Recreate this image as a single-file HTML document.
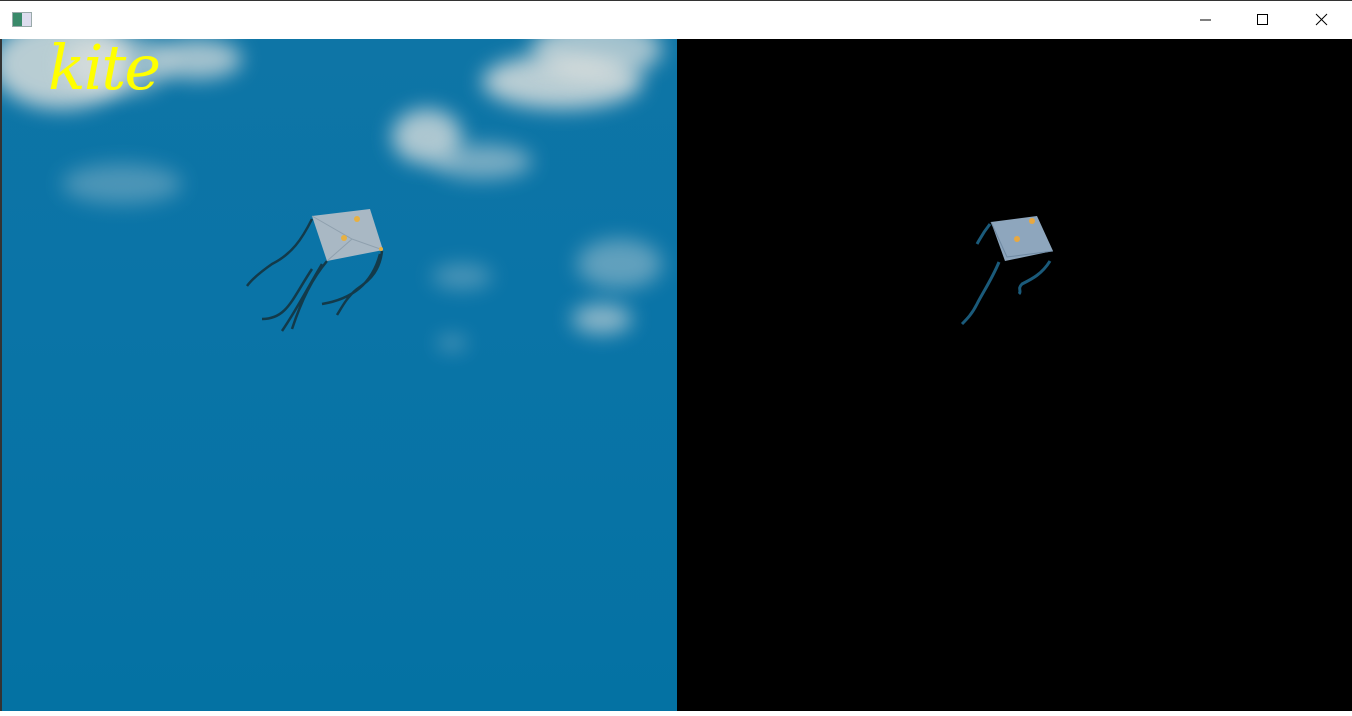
<!DOCTYPE html>
<html><head><meta charset="utf-8"><style>
html,body{margin:0;padding:0;width:1352px;height:711px;overflow:hidden;background:#fff;font-family:"Liberation Sans",sans-serif}
.top{position:absolute;left:0;top:0;width:1352px;height:1px;background:#333}
.bar{position:absolute;left:0;top:1px;width:1352px;height:38px;background:#fff}
.ico{position:absolute;left:12px;top:11px;width:18px;height:13px;border:1px solid #9aa;background:linear-gradient(90deg,#3a8a6a 0 50%,#dde 50%)}
.btn{position:absolute;top:0;width:58px;height:38px}
.left{position:absolute;left:2px;top:39px;width:675px;height:672px;background:linear-gradient(180deg,#0e75a6 0%,#0a74a7 40%,#0472a3 100%);overflow:hidden}
.right{position:absolute;left:677px;top:39px;width:675px;height:672px;background:#000}
.edge{position:absolute;left:0;top:39px;width:2px;height:672px;background:#333}
.c{position:absolute;border-radius:50%;background:#e3e3df;filter:blur(10px)}
.kt{position:absolute;left:46px;top:-8px;color:#ffff00;font-family:"DejaVu Serif",serif;font-style:italic;font-size:62px;letter-spacing:-2px;-webkit-text-stroke:0}
</style></head><body>
<div class="top"></div>
<div class="bar">
<div class="ico"></div>
<svg class="btn" style="left:1176px" viewBox="0 0 58 38"><line x1="24" y1="19" x2="35" y2="19" stroke="#000"/></svg>
<svg class="btn" style="left:1234px" viewBox="0 0 58 38"><rect x="23.5" y="13.5" width="10" height="10" fill="none" stroke="#000"/></svg>
<svg class="btn" style="left:1292px" viewBox="0 0 58 38"><path d="M24 13L35 24M35 13L24 24" stroke="#000"/></svg>
</div>
<div class="edge"></div>
<div class="left">
<div class="c" style="left:-10px;top:-20px;width:140px;height:90px;opacity:.8"></div>
<div class="c" style="left:60px;top:-5px;width:110px;height:60px;opacity:.6"></div>
<div class="c" style="left:150px;top:0px;width:90px;height:40px;opacity:.7"></div>
<div class="c" style="left:480px;top:15px;width:160px;height:55px;opacity:.8"></div>
<div class="c" style="left:530px;top:-20px;width:130px;height:60px;opacity:.7"></div>
<div class="c" style="left:390px;top:70px;width:70px;height:55px;opacity:.75"></div>
<div class="c" style="left:430px;top:105px;width:100px;height:35px;opacity:.5"></div>
<div class="c" style="left:60px;top:125px;width:120px;height:40px;opacity:.3"></div>
<div class="c" style="left:575px;top:200px;width:85px;height:50px;opacity:.4"></div>
<div class="c" style="left:570px;top:265px;width:60px;height:30px;opacity:.6"></div>
<div class="c" style="left:430px;top:225px;width:60px;height:25px;opacity:.3"></div>
<div class="c" style="left:435px;top:298px;width:30px;height:12px;opacity:.4"></div>
<div class="kt">kite</div>
<svg style="position:absolute;left:0;top:0" width="675" height="672">
<g fill="none" stroke="#133a4a" stroke-width="2.5">
<path d="M310 180 C300 200 290 215 270 225 C260 232 250 240 245 247"/>
<path d="M325 222 C310 240 300 260 290 290 M320 225 C305 250 295 270 280 292 M310 230 C290 260 285 280 260 280"/>
<path d="M380 212 C378 230 370 240 355 250 C345 258 340 268 335 276 M378 215 C370 245 350 260 320 265"/>
</g>
<polygon points="310,177 368,170 381,211 325,222" fill="#a9b8c4"/>
<path d="M310 177 L350 200 L381 211 M350 200 L325 222" stroke="#8fa0ae" fill="none"/>
<circle cx="342" cy="199" r="3" fill="#e8b040"/><circle cx="355" cy="180" r="3" fill="#e8b040"/><circle cx="379" cy="210" r="2" fill="#e8b040"/>
</svg>
</div>
<div class="right">
<svg width="675" height="672">
<g fill="none" stroke="#1a5a7a" stroke-width="3">
<path d="M322 223 C315 240 305 255 300 265 C295 275 290 280 285 285"/>
<path d="M373 222 C365 235 355 240 345 245 C340 250 345 252 342 255"/>
<path d="M313 185 C305 195 303 200 300 205"/>
</g>
<polygon points="314,183 360,177 376,212 328,222" fill="#8ea6bd"/>
<path d="M314 183 L330 218 L376 212" stroke="#6f8aa3" fill="none"/>
<circle cx="340" cy="200" r="3" fill="#e8a840"/><circle cx="355" cy="182" r="3" fill="#e8a840"/>
</svg>
</div>
</body></html>
